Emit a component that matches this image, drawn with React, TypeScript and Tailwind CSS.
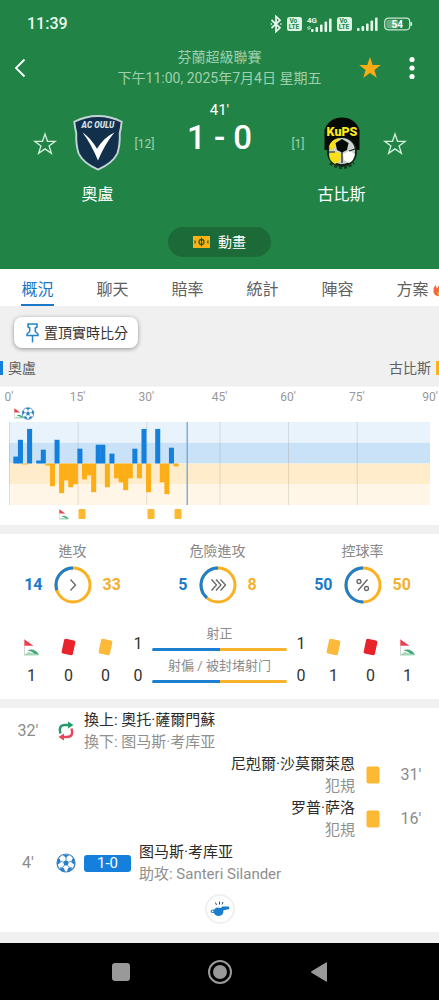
import React from "react";

const BLUE = "#1480dc";
const AMBER = "#fdae17";
const COLUMNS = 92;

/* Attack momentum: [column, height]; positive is home, negative is away. */
const MOMENTUM: [number, number][] = [
  [1, 7], [2, 24], [3, -1], [4, 35], [6, 3], [7, 14], [8, -2], [9, -23], [10, 24],
  [11, -30], [12, -17], [13, -24], [14, -21], [15, 15], [16, -16], [17, -12], [18, -29],
  [19, 19], [20, 19], [21, -24], [22, 10], [23, -15], [24, -19], [25, -27], [26, -15],
  [27, 15], [28, -15], [29, 35], [30, -29], [32, 35], [33, -19], [34, -31], [35, 16], [36, -3],
];

const AXIS: [string, number][] = [
  ["0'", 0], ["15'", 15], ["30'", 30], ["45'", 46], ["60'", 61], ["75'", 76], ["90'", 92],
];

const at = (column: number) => ({ left: `${(column / COLUMNS) * 100}%` });

function CornerFlag({ className }: { className: string }) {
  return (
    <svg viewBox="0 0 16 17" className={className} aria-hidden="true">
      <path d="M0.8 0.2 L10 6.8 H0.8 Z" fill="#e8434f" />
      <path d="M1 7v9" stroke="#c9c9c9" strokeWidth="0.8" />
      <path d="M0.5 16 L5 13 L8 14 L15.8 16.4 H0.5Z" fill="#a4d8b9" />
      <path d="M4 11.5 C8 9.4 13 11 15.5 16 L10 14.4 C9 12.5 6.500 12 4 11.5Z" fill="#45a877" />
    </svg>
  );
}

function Card({ color, className }: { color: string; className: string }) {
  return (
    <svg viewBox="0 0 14 18" className={className} aria-hidden="true">
      <rect x="0.5" y="0.5" width="13" height="17" rx="2" fill={color} />
    </svg>
  );
}

function Ball({ className }: { className: string }) {
  return (
    <svg viewBox="0 0 20 20" className={className} aria-hidden="true">
      <circle cx="10" cy="10" r="9" fill="#fff" stroke="#3a84c2" strokeWidth="1.2" />
      <g fill="#2b80c8">
        <path d="M10 6.900 L12.900 9 L11.800 12.500 H8.200 L7.100 9Z" />
        <path d="M6.200 1.700 H13.800 L10 4.500Z" />
        <path d="M18.400 6 L19 12.200 L15.400 9.600 L16.200 5.800Z" />
        <path d="M1.600 6 L1 12.200 L4.600 9.600 L3.800 5.800Z" />
        <path d="M15.800 17 L10.800 19 L12 15.200 L15.600 14Z" />
        <path d="M4.200 17 L9.200 19 L8 15.200 L4.400 14Z" />
      </g>
      <path
        d="M10 4v3M13 9l3-1M12 12.500l1.600 2.400M8 12.500l-1.600 2.400M7 9l-3-1"
        stroke="#2b80c8"
        strokeWidth="0.8"
      />
    </svg>
  );
}

function StarOutline() {
  return (
    <svg viewBox="0 0 24 24" className="size-6" fill="none" stroke="#d5f0dc" strokeWidth="1.3">
      <path d="M12 2 L14.5 9.3 H22.2 L16.1 13.9 L18.4 21.3 L12 16.9 L5.6 21.3 L7.9 13.9 L1.8 9.3 H9.5Z" />
    </svg>
  );
}

function VoLte() {
  return (
    <svg viewBox="0 0 15 14" className="h-[14px] w-[15px]" aria-hidden="true">
      <rect width="15" height="14" rx="2.5" fill="#dcf5e2" />
      <g fill="#218446" fontFamily="Roboto, sans-serif" fontWeight="700" fontSize="6.5">
        <text x="2.5" y="6.3">Vo</text>
        <text x="1.8" y="12.4">LTE</text>
      </g>
    </svg>
  );
}

function Signal() {
  return (
    <svg viewBox="0 0 21 14" className="h-[14px] w-[21px]" fill="#e6f7ea" aria-hidden="true">
      <rect x="0" y="11" width="2.6" height="3" rx="1" />
      <rect x="4.5" y="9" width="2.6" height="5" rx="1" />
      <rect x="9" y="6.5" width="2.6" height="7.5" rx="1" />
      <rect x="13.5" y="3.5" width="2.6" height="10.5" rx="1" />
      <rect x="18" y="0.5" width="2.6" height="13.5" rx="1" />
    </svg>
  );
}

function StatusBar() {
  return (
    <div className="flex h-[47px] items-center justify-between pr-[26px] pl-[27px] text-[#e9f8ec]">
      <span className="text-base font-medium">11:39</span>
      <div className="flex items-center gap-[5px]">
        <svg viewBox="0 0 12 18" className="h-[18px] w-3" fill="none" stroke="currentColor" strokeWidth="1.7">
          <path d="M1.5 5 L10 12.8 L6 16.6 V1.4 L10 5.2 L1.5 13" />
          <path d="M0.6 9h1.3M10.2 9h1.3" />
        </svg>
        <VoLte />
        <div className="flex items-end">
          <svg viewBox="0 0 12 16" className="-mr-2 h-4 w-3 overflow-visible" fill="currentColor">
            <text x="0" y="6.5" fontFamily="Roboto, sans-serif" fontWeight="700" fontSize="8">4G</text>
            <path d="M0 12 L1.5 10 V14H0.800V12Z M4 12 L2.500 14 V10H3.200V12Z" />
          </svg>
          <Signal />
        </div>
        <VoLte />
        <Signal />
        <svg viewBox="0 0 29 14" className="ml-px h-[14px] w-[29px]" aria-label="54%">
          <rect x="0.7" y="1.2" width="25" height="11.6" rx="3.5" fill="none" stroke="#c7e8cf" strokeWidth="1.2" />
          <rect x="2.3" y="2.8" width="12" height="8.4" rx="2" fill="#69ae7f" />
          <path d="M27 5.2 Q28.6 7 27 8.8Z" fill="#e6f7ea" stroke="#e6f7ea" />
          <text x="13.2" y="10.7" textAnchor="middle" fill="#fff" fontFamily="Roboto, sans-serif" fontWeight="700" fontSize="10">54</text>
        </svg>
      </div>
    </div>
  );
}

function OuluCrest() {
  return (
    <svg viewBox="0 0 52 58" className="h-14 w-[52px]" role="img" aria-label="奧盧">
      <path
        d="M1.5 7 Q13 1 26 1 Q39 1 50.5 7 Q50 13 48.5 19 Q49 31 46 40 Q41 50 26 56.5 Q11 50 6 40 Q3 31 3.5 19 Q2 13 1.5 7Z"
        fill="#12304b"
        stroke="#c3d5d6"
        strokeWidth="2"
      />
      <path d="M10 18 Q18 23 25 35 Q32 23 43 18 Q33 30 26 47 Q19 30 10 18Z" fill="#fff" />
      <text x="26" y="13.5" textAnchor="middle" fill="#d7e0e6" fontFamily="Roboto, sans-serif" fontWeight="900" fontStyle="italic" fontSize="8.5">
        AC OULU
      </text>
    </svg>
  );
}

function KupsCrest() {
  return (
    <svg viewBox="0 0 38 54" className="h-14 w-[38px]" role="img" aria-label="古比斯">
      <path d="M1.5 34 V14 Q6 1.5 19 1.5 Q32 1.5 36.5 14 V34Z" fill="#060a06" />
      <circle cx="19" cy="36" r="15" fill="#152315" />
      <circle cx="19" cy="35" r="13" fill="#cfd3cf" />
      <path d="M6 30 Q9 23 16 22 L14 29 L8 35Z M6 38 L12 35 L18 38 L17 45 L12 48 Q6 45 6 38Z" fill="#f7e01a" />
      <path d="M20 38 L26 35 L32 38 Q31 45 26 47 L21 44Z" fill="#fff" />
      <path d="M19 23 L25.5 27 L24 34 L19 36.500 L14 34 L12.5 27Z" fill="#060a06" />
      <path d="M5 36h7M26 35l6-2M19 36v11" stroke="#152315" strokeWidth="1.2" />
      <path d="M7 47 Q19 56 31 47" fill="none" stroke="#153c22" strokeWidth="3" strokeDasharray="3 2" />
      <text x="19" y="19.5" textAnchor="middle" fill="#ffe81c" fontFamily="Roboto, sans-serif" fontWeight="900" fontSize="12.5">
        KuPS
      </text>
    </svg>
  );
}

function Team({ name, children }: { name: string; children: React.ReactNode }) {
  return (
    <div className="flex w-[74px] flex-col items-center pt-[15px]">
      {children}
      <span className="mt-3 text-base leading-6 text-white">{name}</span>
    </div>
  );
}

function Header() {
  return (
    <header className="bg-[#218446] pb-3">
      <StatusBar />
      <div className="flex h-[42px] items-center pr-[17px] pl-[9px]">
        <button aria-label="返回" className="w-[72px]">
          <svg viewBox="0 0 22 22" className="size-[22px]" fill="none" stroke="#fff" strokeWidth="1.8">
            <path d="M15.5 2.5 L7 11 L15.5 19.5" />
          </svg>
        </button>
        <div className="flex-1 text-center text-sm leading-[21px] text-[#9fd0ae]">
          <div>芬蘭超級聯賽</div>
          <div className="whitespace-nowrap">下午11:00, 2025年7月4日 星期五</div>
        </div>
        <div className="flex w-16 items-center gap-5">
          <button aria-label="收藏比賽">
            <svg viewBox="0 0 24 24" className="size-6" fill="#fdab14">
              <path d="M12 1 L14.7 9 H22.8 L16.4 13.9 L18.7 21.8 L12 17.1 L5.3 21.8 L7.6 13.9 L1.2 9 H9.3Z" />
            </svg>
          </button>
          <button aria-label="更多" className="w-5">
            <svg viewBox="0 0 8 24" className="mx-auto h-6 w-2" fill="#fff">
              <circle cx="4" cy="3.5" r="2.6" />
              <circle cx="4" cy="12" r="2.6" />
              <circle cx="4" cy="20.5" r="2.6" />
            </svg>
          </button>
        </div>
      </div>
      <div className="mt-[11px] flex justify-center">
        <button aria-label="關注奧盧" className="mt-8 mr-[4px] h-6">
          <StarOutline />
        </button>
        <Team name="奧盧"><OuluCrest /></Team>
        <span className="w-5 pt-9 text-xs leading-4 text-[#a3d2b1]">[12]</span>
        <div className="flex w-[130px] flex-col items-center text-white">
          <span className="text-[15px] leading-5">41'</span>
          <span className="text-[33px] leading-9 font-medium whitespace-nowrap">1 - 0</span>
        </div>
        <span className="w-5 pt-9 text-right text-xs leading-4 text-[#a3d2b1]">[1]</span>
        <Team name="古比斯"><KupsCrest /></Team>
        <button aria-label="關注古比斯" className="mt-8 ml-[4px] h-6">
          <StarOutline />
        </button>
      </div>
      <button className="mx-auto mt-5 flex h-[30px] w-[103px] items-center justify-center gap-2 rounded-full bg-[#1b6a38] text-sm text-white">
        <svg viewBox="0 0 17 12" className="h-3 w-[17px]" fill="none" stroke="#31591d">
          <rect width="17" height="12" fill="#fdb316" stroke="none" />
          <circle cx="8.5" cy="6" r="2.5" strokeWidth="1.3" />
          <path d="M8.5 1.5v9" strokeWidth="1.1" />
          <path d="M1 5h1.500v2H1M16 5h-1.500v2H16" strokeWidth="0.8" />
        </svg>
        動畫
      </button>
    </header>
  );
}

function Tabs() {
  const tabs = ["概況", "聊天", "賠率", "統計", "陣容", "方案"];
  return (
    <nav className="flex h-[37px] overflow-hidden bg-white">
      {tabs.map((tab, i) => (
        <button
          key={tab}
          className={
            i === 0
              ? "flex w-[75px] shrink-0 justify-center text-base text-[#1c78c6]"
              : "flex w-[75px] shrink-0 justify-center text-base text-[#606060]"
          }
        >
          <span
            className={
              i === 0
                ? "relative h-[37px] border-b-2 border-[#1c78c6] leading-[41px]"
                : "relative h-[37px] leading-[41px]"
            }
          >
            {tab}
            {i === 5 && (
              <svg viewBox="0 0 14 18" className="absolute top-3 left-full ml-1 h-4 w-3" aria-hidden="true">
                <path d="M7 0 Q13 5 13 11 Q13 17.5 7 17.5 Q0.5 17 0.5 11 Q0.5 7 3 4 Q3 7 5 8 Q8 4 7 0Z" fill="#f4683f" />
                <path d="M8 9 Q11 12 11 14 Q10 17 8 17 Q5.500 17 5.500 14Z" fill="#fdc04a" />
              </svg>
            )}
          </span>
        </button>
      ))}
    </nav>
  );
}

function MomentumChart() {
  return (
    <section className="border-t border-[#f6f6f6] bg-white pb-0.5">
      <div className="mx-[9px]">
        <div className="relative h-[18px]">
          {AXIS.map(([label, column]) => (
            <span
              key={label}
              style={at(column)}
              className="absolute top-px -translate-x-1/2 text-xs leading-[18px] text-[#989898]"
            >
              {label}
            </span>
          ))}
        </div>
        <div className="relative h-[17px]">
          <span style={at(2.1)} className="absolute top-[3px] -translate-x-1/2">
            <CornerFlag className="size-[11px]" />
          </span>
          <span style={at(4.1)} className="absolute top-0.5 -translate-x-1/2">
            <Ball className="size-[13px]" />
          </span>
        </div>
        <svg viewBox="0 0 92 84" preserveAspectRatio="none" className="block h-[83px] w-full">
          <rect width="92" height="21" fill="#e8f3fc" />
          <rect y="21" width="92" height="21" fill="#cae2f7" />
          <rect y="42" width="92" height="21" fill="#feecca" />
          <rect y="63" width="92" height="21" fill="#fff6e8" />
          {[0, 15, 30, 46, 61, 76].map((x) => (
            <rect key={x} x={x} width="0.2" height="84" fill="#8a7f78" fillOpacity="0.25" />
          ))}
          {MOMENTUM.map(([x, h]) => (
            <rect
              key={x}
              x={x - 0.05}
              y={h > 0 ? 42 - h : 42}
              width="1.1"
              height={Math.abs(h)}
              fill={h > 0 ? BLUE : AMBER}
            />
          ))}
          <rect x="38.8" width="0.3" height="84" fill="#75a9d8" />
        </svg>
        <div className="relative h-[18px]">
          <span style={at(12.1)} className="absolute top-1 -translate-x-1/2">
            <CornerFlag className="size-[11px]" />
          </span>
          {[16, 31, 37].map((x) => (
            <span key={x} style={at(x)} className="absolute top-1 h-2.5 w-[7px] -translate-x-1/2 rounded-[1px] bg-[#fdb932]" />
          ))}
        </div>
      </div>
    </section>
  );
}

function Ring({ share, children }: { share: number; children: React.ReactNode }) {
  const length = 2 * Math.PI * 17;
  return (
    <svg viewBox="0 0 38 38" className="size-[38px]" fill="none" aria-hidden="true">
      <circle cx="19" cy="19" r="17" stroke="#fbb022" strokeWidth="3" />
      <circle
        cx="19"
        cy="19"
        r="17"
        stroke="#1c7fd0"
        strokeWidth="3"
        strokeDasharray={`${length * share} ${length}`}
        transform="matrix(0 -1 -1 0 38 38)"
      />
      <g stroke="#666" strokeWidth="1.3">{children}</g>
    </svg>
  );
}

function RingStat({ label, home, away, children }: { label: string; home: number; away: number; children: React.ReactNode }) {
  return (
    <div className="flex flex-col items-center">
      <span className="text-sm leading-5 text-[#888]">{label}</span>
      <div className="mt-[5px] flex items-center gap-[11px] text-base font-bold">
        <span className="text-[#1c7bc9]">{home}</span>
        <Ring share={home / (home + away)}>{children}</Ring>
        <span className="text-[#f3b02c]">{away}</span>
      </div>
    </div>
  );
}

function Count({ value, children }: { value: number; children: React.ReactNode }) {
  return (
    <div className="flex w-[37px] flex-col items-center">
      <div className="flex h-9 items-center pt-4">{children}</div>
      <span className="leading-[38px]">{value}</span>
    </div>
  );
}

function ShotBar({ label }: { label: string }) {
  return (
    <div className="h-8">
      <div className="pb-0.5 text-center text-[13px] leading-6 whitespace-nowrap text-[#8c8c8c]">{label}</div>
      <div className="flex h-[3px] overflow-hidden rounded-full">
        <div className="flex-1 bg-[#1c7fd0]" />
        <div className="flex-1 bg-[#f7b32b]" />
      </div>
    </div>
  );
}

function Stats() {
  const red = <Card color="#e8232a" className="h-4 w-[13px] rotate-12" />;
  const yellow = <Card color="#fcb93a" className="h-4 w-[13px] rotate-12" />;
  const corner = <CornerFlag className="size-[17px]" />;
  return (
    <section className="bg-white pt-[7px] pb-1">
      <div className="grid grid-cols-3 pr-1">
        <RingStat label="進攻" home={14} away={33}>
          <path d="M16.5 13.5 L21.5 19 L16.5 24.5" />
        </RingStat>
        <RingStat label="危險進攻" home={5} away={8}>
          <path d="M12.5 13.5 L17.5 19 L12.5 24.5M17 13.5 L22 19 L17 24.5M21.5 13.5 L26.5 19 L21.5 24.5" />
        </RingStat>
        <RingStat label="控球率" home={50} away={50}>
          <path d="M23.5 13.5 L14 24.5" />
          <circle cx="15" cy="15.5" r="2" />
          <circle cx="22.5" cy="22.5" r="2" />
        </RingStat>
      </div>
      <div className="mt-[17px] flex px-[13px] text-base text-[#333]">
        <Count value={1}>{corner}</Count>
        <Count value={0}>{red}</Count>
        <Count value={0}>{yellow}</Count>
        <div className="flex w-7 flex-col items-center pt-[7px] leading-8">
          <span>1</span>
          <span>0</span>
        </div>
        <div className="min-w-0 flex-1 pt-px">
          <ShotBar label="射正" />
          <ShotBar label="射偏 / 被封堵射门" />
        </div>
        <div className="flex w-7 flex-col items-center pt-[7px] leading-8">
          <span>1</span>
          <span>0</span>
        </div>
        <Count value={1}>{yellow}</Count>
        <Count value={0}>{red}</Count>
        <Count value={1}>{corner}</Count>
      </div>
    </section>
  );
}

function EventRow({
  minute, title, detail, icon, score, away,
}: {
  minute: string; title: string; detail: string; icon: React.ReactNode; score?: string; away?: boolean;
}) {
  return (
    <li className={away ? "flex h-11 flex-row-reverse items-center" : "flex h-11 items-center"}>
      <span className="w-14 shrink-0 text-center text-base text-[#8b8b8b]">{minute}</span>
      <span className="flex w-5 shrink-0 justify-center">{icon}</span>
      {score && (
        <span className="ml-2 w-[47px] rounded-[3px] bg-[#1480dc] text-center text-[15px] leading-[17px] text-white">
          {score}
        </span>
      )}
      <div className={away ? "mr-2 text-right text-[15px] leading-[22px]" : "ml-2 text-[15px] leading-[22px]"}>
        <div className="text-[#2b2b2b]">{title}</div>
        <div className="text-[#8f8f8f]">{detail}</div>
      </div>
    </li>
  );
}

function Events() {
  const card = <Card color="#fdb932" className="h-[18px] w-[14px]" />;
  return (
    <section className="bg-white pt-px pb-2">
      <ul>
        <EventRow
          minute="32'"
          title="換上: 奧托·薩爾門蘇"
          detail="換下: 图马斯·考库亚"
          icon={
            <svg viewBox="0 0 18 20" className="h-5 w-[18px]" fill="none" strokeWidth="2.4">
              <path d="M3.500 12.500 Q1 4 8 4 H12" stroke="#249b69" />
              <path d="M11 0.5 L16.5 4 L11 7.5Z" fill="#249b69" />
              <path d="M14.500 7.500 Q17 16 10 16 H6" stroke="#e6485c" />
              <path d="M7 12.5 L1.5 16 L7 19.5Z" fill="#e6485c" />
            </svg>
          }
        />
        <EventRow away minute="31'" title="尼剋爾·沙莫爾萊恩" detail="犯規" icon={card} />
        <EventRow away minute="16'" title="罗普·萨洛" detail="犯規" icon={card} />
        <EventRow
          minute="4'"
          title="图马斯·考库亚"
          detail="助攻: Santeri Silander"
          score="1-0"
          icon={<Ball className="size-5" />}
        />
      </ul>
      <div className="mx-auto mt-[9px] flex size-[30px] items-center justify-center rounded-full border-2 border-[#f0f0f0]">
        <svg viewBox="0 0 20 16" className="h-4 w-5" aria-label="開賽">
          <path d="M7 6.5 L11 7 L12 5.500 L19 5.5 Q20 7.5 18.5 8.2 L13.5 9.3 Q13.5 15 8.8 15 Q5.2 15 4 12 Q1 12.5 0.5 10.5 Q1 8 4.2 8.7 Q5 7 7 6.5Z" fill="#1b7dce" />
          <path d="M5.500 1.500l1 2.500M9.500 0.500V3.500M13 1l-1 2.500" stroke="#1d4f7c" strokeWidth="1" />
          <circle cx="2.6" cy="10.3" r="0.9" fill="#fff" />
        </svg>
      </div>
    </section>
  );
}

export default function App() {
  return (
    <div className="min-h-screen bg-[#f0f0f0] [font-family:Roboto,'Noto_Sans_CJK_TC','Noto_Sans_CJK_SC',sans-serif]">
      <Header />
      <Tabs />
      <main>
        <button className="mt-[11px] ml-[14px] flex h-[31px] items-center gap-[5px] rounded-lg bg-white pr-2.5 pl-3 text-sm text-[#333] shadow-[0_1px_4px_rgba(0,0,0,0.4)]">
          <svg viewBox="0 0 13 20" className="h-5 w-[13px]" fill="none" stroke="#2583c9" strokeWidth="1.5">
            <path d="M2 1h9v3l-1.7 1v3.5l2.7 2.5v1.5H1V11l2.7-2.5V5L2 4Z" />
            <path d="M6.500 12.500v7" />
          </svg>
          置頂實時比分
        </button>
        <div className="flex h-[38px] items-center justify-between pt-0.5 text-sm text-[#606060]">
          <span className="flex items-center gap-[5px]">
            <span className="h-[14px] w-[3px] bg-[#1480dc]" />
            奧盧
          </span>
          <span className="flex items-center gap-[5px]">
            古比斯
            <span className="h-[14px] w-[3px] bg-[#fdb316]" />
          </span>
        </div>
        <MomentumChart />
        <div className="h-[9px]" />
        <Stats />
        <div className="h-[9px]" />
        <Events />
        <div className="h-[11px]" />
      </main>
      <footer className="flex h-[57px] items-center justify-center gap-[78px] bg-black">
        <button aria-label="最近" className="size-[18px] rounded-[3px] bg-[#999]" />
        <button aria-label="主頁" className="flex size-6 items-center justify-center rounded-full border-2 border-[#999]">
          <span className="size-[14px] rounded-full bg-[#999]" />
        </button>
        <button aria-label="返回上一頁">
          <svg viewBox="0 0 18 20" className="h-5 w-[18px]" fill="#999">
            <path d="M1.500 9.200 Q0.500 10 1.500 10.800 L16 19.600 Q17 20 17 19 V1 Q17 0 16 0.400Z" />
          </svg>
        </button>
      </footer>
    </div>
  );
}
